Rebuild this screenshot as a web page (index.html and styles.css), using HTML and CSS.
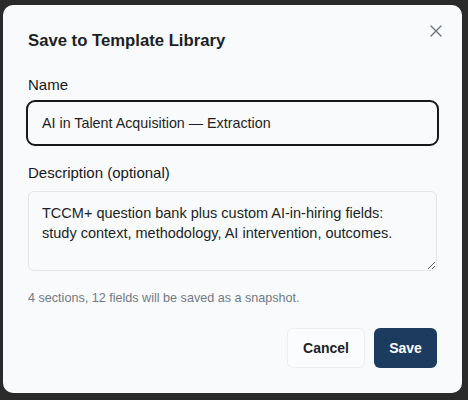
FILE: index.html
```html
<!DOCTYPE html>
<html lang="en">
<head>
    <meta charset="UTF-8">
    <title>Save to Template Library</title>
    <link rel="stylesheet" href="styles.css">
</head>
<body>
    <div class="dialog">
        <button class="close-btn" aria-label="Close">
            <svg width="12" height="12" viewBox="0 0 12 12"><path d="M1 1L11 11M11 1L1 11" stroke="#6b6f76" stroke-width="1.3" stroke-linecap="round"/></svg>
        </button>
        <h2 class="title">Save to Template Library</h2>
        <label class="label" for="tpl-name">Name</label>
        <input id="tpl-name" class="name-input" type="text" value="AI in Talent Acquisition — Extraction">
        <label class="label" for="tpl-desc">Description (optional)</label>
        <textarea id="tpl-desc" class="desc-input">TCCM+ question bank plus custom AI-in-hiring fields: study context, methodology, AI intervention, outcomes.</textarea>
        <div class="hint">4 sections, 12 fields will be saved as a snapshot.</div>
        <div class="actions">
            <button class="btn btn-cancel">Cancel</button>
            <button class="btn btn-save">Save</button>
        </div>
    </div>
</body>
</html>
```

FILE: styles.css
```css
body {
    margin: 0;
    background-color: #2a2a2a;
    font-family: "Liberation Sans", Arial, sans-serif;
    color: #1c1f24;
}
.dialog {
    position: relative;
    box-sizing: border-box;
    width: 459px;
    height: 388px;
    margin: 5px 0 0 3px;
    padding: 24px 25px 0 25px;
    background-color: #f8fafc;
    border-radius: 10px;
    display: flex;
    flex-direction: column;
}
.close-btn {
    position: absolute;
    top: 16px;
    right: 16px;
    width: 20px;
    height: 20px;
    padding: 0;
    border: none;
    background: none;
    display: flex;
    align-items: center;
    justify-content: center;
}
.title {
    margin: 0;
    font-size: 16.7px;
    line-height: 24px;
    font-weight: 700;
    color: #1c1f24;
}
.label {
    margin-top: 23px;
    font-size: 15px;
    line-height: 18px;
    color: #16181c;
}
.name-input {
    box-sizing: border-box;
    margin: 6px -2px 0 -2px;
    height: 46px;
    padding: 0 14px;
    border: 2px solid #16181c;
    border-radius: 9px;
    background-color: #f8fafc;
    font-family: inherit;
    font-size: 14.3px;
    color: #1c1f24;
    outline: none;
}
.name-input + .label {
    margin-top: 18px;
}
.desc-input {
    box-sizing: border-box;
    margin-top: 9px;
    height: 80px;
    padding: 11px 22px 11px 13px;
    border: 1px solid #e3e6ea;
    border-radius: 6px;
    background-color: #f8fafc;
    font-family: inherit;
    font-size: 14.5px;
    line-height: 20px;
    color: #1c1f24;
    resize: vertical;
}
.hint {
    margin-top: 20px;
    font-size: 12.6px;
    color: #737984;
}
.actions {
    margin-top: 23px;
    display: flex;
    justify-content: flex-end;
    gap: 9px;
}
.btn {
    height: 40px;
    border-radius: 6px;
    font-family: inherit;
    font-size: 14px;
    font-weight: 700;
}
.btn-cancel {
    width: 78px;
    background-color: #fbfcfd;
    border: 1px solid #eceef1;
    color: #1c1f24;
}
.btn-save {
    width: 63px;
    background-color: #1c3b5e;
    border: none;
    color: #ffffff;
}
```
